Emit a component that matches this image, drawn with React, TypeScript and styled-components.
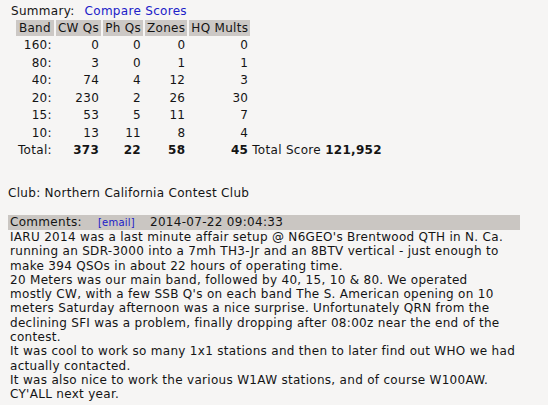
import React from 'react'
import styled, { createGlobalStyle } from 'styled-components'

const GlobalStyle = createGlobalStyle`
    html, body {
        margin: 0;
        padding: 0;
        background: #f6f5f4;
    }
    body {
        font-family: 'DejaVu Sans', Verdana, sans-serif;
        font-size: 12px;
        letter-spacing: 0.3px;
        color: #141414;
    }
`

const Page = styled.div`
    width: 548px;
    height: 405px;
    overflow: hidden;
    padding: 4px 0 0 8px;
    box-sizing: border-box;
`

const SummaryLine = styled.div`
    display: flex;
    gap: 10px;
    padding-left: 3px;
    line-height: 14px;
`

const BlueLink = styled.a`
    color: #2020c8;
    text-decoration: none;
`

const ScoreTable = styled.table`
    border-collapse: separate;
    border-spacing: 2px 2px;
    margin: 0 0 0 6px;
    font-size: 12px;
`

const HeadCell = styled.th`
    background: #ccc8c5;
    font-weight: normal;
    padding: 0.5px 2px;
    line-height: 14.5px;
    white-space: nowrap;
`

const Cell = styled.td<{ $bold?: boolean; $left?: boolean }>`
    text-align: ${(p) => (p.$left ? 'left' : 'right')};
    font-weight: ${(p) => (p.$bold ? 'bold' : 'normal')};
    padding: 0.5px 2px 0.5px ${(p) => (p.$left ? '0' : '2px')};
    line-height: 14.5px;
    white-space: nowrap;
`

const Strong = styled.b`
    font-weight: bold;
`

const ClubLine = styled.div`
    margin-top: 26px;
    line-height: 14px;
`

const CommentsBar = styled.div`
    display: flex;
    align-items: baseline;
    width: 512px;
    margin-top: 15px;
    padding: 0 2px;
    box-sizing: border-box;
    background: #cac6c2;
    line-height: 15px;
`

const BarLabel = styled.span`
    width: 88px;
`

const EmailLink = styled(BlueLink)`
    font-size: 10px;
    letter-spacing: 0.2px;
    width: 52px;
`

const CommentBody = styled.div`
    padding-left: 2px;
    line-height: 14.3px;
    white-space: nowrap;
`

const Line = styled.div``

const rows = [
    ['160:', 0, 0, 0, 0],
    ['80:', 3, 0, 1, 1],
    ['40:', 74, 4, 12, 3],
    ['20:', 230, 2, 26, 30],
    ['15:', 53, 5, 11, 7],
    ['10:', 13, 11, 8, 4],
]

const commentLines = [
    "IARU 2014 was a last minute affair setup @ N6GEO's Brentwood QTH in N. Ca.",
    'running an SDR-3000 into a 7mh TH3-Jr and an 8BTV vertical - just enough to',
    'make 394 QSOs in about 22 hours of operating time.',
    '20 Meters was our main band, followed by 40, 15, 10 & 80. We operated',
    "mostly CW, with a few SSB Q's on each band The S. American opening on 10",
    'meters Saturday afternoon was a nice surprise. Unfortunately QRN from the',
    'declining SFI was a problem, finally dropping after 08:00z near the end of the',
    'contest.',
    'It was cool to work so many 1x1 stations and then to later find out WHO we had',
    'actually contacted.',
    'It was also nice to work the various W1AW stations, and of course W100AW.',
    "CY'ALL next year.",
]

export default function App() {
    return (
        <>
            <GlobalStyle />
            <Page>
                <SummaryLine>
                    <span>Summary:</span>
                    <BlueLink href="#">Compare Scores</BlueLink>
                </SummaryLine>
                <ScoreTable>
                    <thead>
                        <tr>
                            <HeadCell>Band</HeadCell>
                            <HeadCell>CW Qs</HeadCell>
                            <HeadCell>Ph Qs</HeadCell>
                            <HeadCell>Zones</HeadCell>
                            <HeadCell>HQ Mults</HeadCell>
                        </tr>
                    </thead>
                    <tbody>
                        {rows.map((r) => (
                            <tr key={r[0]}>
                                {r.map((v, i) => (
                                    <Cell key={i}>{v}</Cell>
                                ))}
                            </tr>
                        ))}
                        <tr>
                            <Cell>Total:</Cell>
                            <Cell $bold>373</Cell>
                            <Cell $bold>22</Cell>
                            <Cell $bold>58</Cell>
                            <Cell $bold>45</Cell>
                            <Cell $left>
                                Total Score <Strong>121,952</Strong>
                            </Cell>
                        </tr>
                    </tbody>
                </ScoreTable>
                <ClubLine>Club: Northern California Contest Club</ClubLine>
                <CommentsBar>
                    <BarLabel>Comments:</BarLabel>
                    <EmailLink href="#">[email]</EmailLink>
                    <span>2014-07-22 09:04:33</span>
                </CommentsBar>
                <CommentBody>
                    {commentLines.map((l, i) => (
                        <Line key={i}>{l}</Line>
                    ))}
                </CommentBody>
            </Page>
        </>
    )
}
